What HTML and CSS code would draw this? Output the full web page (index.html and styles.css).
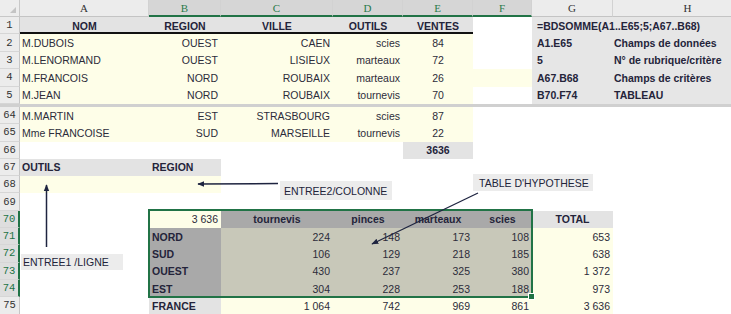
FILE: index.html
```html
<!DOCTYPE html>
<html lang="fr">
<head>
<meta charset="utf-8">
<title>BDSOMME - table d'hypothèse</title>
<link rel="stylesheet" href="styles.css">
</head>
<body>
<div class="sheet">
  <div class="row hdr">
    <div class="corner"><span class="tri"></span></div>
    <div class="ch">A</div><div class="ch sel">B</div><div class="ch sel">C</div><div class="ch sel">D</div><div class="ch sel">E</div><div class="ch sel">F</div><div class="ch">G</div><div class="ch">H</div>
  </div>

  <div class="row">
    <div class="rh">1</div>
    <div class="c m b gray thick">NOM</div>
    <div class="c m b gray thick">REGION</div>
    <div class="c m b gray thick">VILLE</div>
    <div class="c m b gray thick">OUTILS</div>
    <div class="c m b gray thick">VENTES</div>
    <div class="c"></div>
    <div class="c b side g span2">=BDSOMME(A1..E65;5;A67..B68)</div>
  </div>
  <div class="row">
    <div class="rh">2</div>
    <div class="c l cream">M.DUBOIS</div>
    <div class="c r cream">OUEST</div>
    <div class="c r cream">CAEN</div>
    <div class="c r cream">scies</div>
    <div class="c m cream">84</div>
    <div class="c"></div>
    <div class="c b side g">A1.E65</div>
    <div class="c b side h">Champs de données</div>
  </div>
  <div class="row">
    <div class="rh">3</div>
    <div class="c l cream">M.LENORMAND</div>
    <div class="c r cream">OUEST</div>
    <div class="c r cream">LISIEUX</div>
    <div class="c r cream">marteaux</div>
    <div class="c m cream">72</div>
    <div class="c"></div>
    <div class="c b side g">5</div>
    <div class="c b side h">N° de rubrique/critère</div>
  </div>
  <div class="row">
    <div class="rh">4</div>
    <div class="c l cream">M.FRANCOIS</div>
    <div class="c r cream">NORD</div>
    <div class="c r cream">ROUBAIX</div>
    <div class="c r cream">marteaux</div>
    <div class="c m cream">26</div>
    <div class="c cream"></div>
    <div class="c b side g">A67.B68</div>
    <div class="c b side h">Champs de critères</div>
  </div>
  <div class="row">
    <div class="rh">5</div>
    <div class="c l cream">M.JEAN</div>
    <div class="c r cream">NORD</div>
    <div class="c r cream">ROUBAIX</div>
    <div class="c r cream">tournevis</div>
    <div class="c m cream">70</div>
    <div class="c"></div>
    <div class="c b side g">B70.F74</div>
    <div class="c b side h">TABLEAU</div>
  </div>

  <div class="sep"></div>

  <div class="row lo">
    <div class="rh">64</div>
    <div class="c l cream">M.MARTIN</div>
    <div class="c r cream">EST</div>
    <div class="c r cream">STRASBOURG</div>
    <div class="c r cream">scies</div>
    <div class="c m cream">87</div>
    <div class="c"></div><div class="c"></div><div class="c"></div>
  </div>
  <div class="row lo">
    <div class="rh">65</div>
    <div class="c l cream">Mme FRANCOISE</div>
    <div class="c r cream">SUD</div>
    <div class="c r cream">MARSEILLE</div>
    <div class="c r cream">tournevis</div>
    <div class="c m cream">22</div>
    <div class="c"></div><div class="c"></div><div class="c"></div>
  </div>
  <div class="row lo">
    <div class="rh">66</div>
    <div class="c"></div><div class="c"></div><div class="c"></div><div class="c"></div>
    <div class="c m b gray">3636</div>
    <div class="c"></div><div class="c"></div><div class="c"></div>
  </div>
  <div class="row lo">
    <div class="rh">67</div>
    <div class="c l b gray">OUTILS</div>
    <div class="c l b gray pl">REGION</div>
    <div class="c"></div><div class="c"></div><div class="c"></div><div class="c"></div><div class="c"></div><div class="c"></div>
  </div>
  <div class="row lo">
    <div class="rh">68</div>
    <div class="c cream"></div>
    <div class="c cream"></div>
    <div class="c"></div><div class="c"></div><div class="c"></div><div class="c"></div><div class="c"></div><div class="c"></div>
  </div>
  <div class="row lo">
    <div class="rh">69</div>
    <div class="c"></div><div class="c"></div><div class="c"></div><div class="c"></div><div class="c"></div><div class="c"></div><div class="c"></div><div class="c"></div>
  </div>
  <div class="row lo">
    <div class="rh on">70</div>
    <div class="c"></div>
    <div class="c r cream">3 636</div>
    <div class="c m b dark">tournevis</div>
    <div class="c m b dark">pinces</div>
    <div class="c m b dark">marteaux</div>
    <div class="c m b dark">scies</div>
    <div class="c m b gray">TOTAL</div>
    <div class="c"></div>
  </div>
  <div class="row lo">
    <div class="rh on">71</div>
    <div class="c"></div>
    <div class="c l b dark pl">NORD</div>
    <div class="c r olive">224</div>
    <div class="c r olive">148</div>
    <div class="c r olive">173</div>
    <div class="c r olive">108</div>
    <div class="c r cream">653</div>
    <div class="c"></div>
  </div>
  <div class="row lo">
    <div class="rh on">72</div>
    <div class="c"></div>
    <div class="c l b dark pl">SUD</div>
    <div class="c r olive">106</div>
    <div class="c r olive">129</div>
    <div class="c r olive">218</div>
    <div class="c r olive">185</div>
    <div class="c r cream">638</div>
    <div class="c"></div>
  </div>
  <div class="row lo">
    <div class="rh on">73</div>
    <div class="c"></div>
    <div class="c l b dark pl">OUEST</div>
    <div class="c r olive">430</div>
    <div class="c r olive">237</div>
    <div class="c r olive">325</div>
    <div class="c r olive">380</div>
    <div class="c r cream">1 372</div>
    <div class="c"></div>
  </div>
  <div class="row lo">
    <div class="rh on">74</div>
    <div class="c"></div>
    <div class="c l b dark pl">EST</div>
    <div class="c r olive">304</div>
    <div class="c r olive">228</div>
    <div class="c r olive">253</div>
    <div class="c r olive">188</div>
    <div class="c r cream">973</div>
    <div class="c"></div>
  </div>
  <div class="row lo">
    <div class="rh">75</div>
    <div class="c"></div>
    <div class="c l b gray pl">FRANCE</div>
    <div class="c r cream">1 064</div>
    <div class="c r cream">742</div>
    <div class="c r cream">969</div>
    <div class="c r cream">861</div>
    <div class="c r cream">3 636</div>
    <div class="c"></div>
  </div>

  <div class="selection"><span class="handle"></span></div>

  <svg class="arrows" width="731" height="314" viewBox="0 0 731 314">
    <defs>
      <marker id="ah" viewBox="0 0 10 10" refX="9" refY="5" markerWidth="7" markerHeight="7" orient="auto" markerUnits="userSpaceOnUse">
        <path d="M0 1 L10 5 L0 9 Z" fill="#1e2440"/>
      </marker>
    </defs>
    <line x1="278" y1="183.5" x2="198" y2="184" stroke="#1e2440" stroke-width="1.5" marker-end="url(#ah)"/>
    <line x1="46.5" y1="247" x2="46.5" y2="185" stroke="#1e2440" stroke-width="1.5" marker-end="url(#ah)"/>
    <line x1="478" y1="193" x2="372" y2="244" stroke="#1e2440" stroke-width="1.3" marker-end="url(#ah)"/>
  </svg>

  <div class="note n2">ENTREE2/COLONNE</div>
  <div class="note n1">ENTREE1 /LIGNE</div>
  <div class="note n3">TABLE D'HYPOTHESE</div>
</div>
</body>
</html>
```

FILE: styles.css
```css
html, body {
  margin: 0;
  padding: 0;
  background: #ffffff;
}
body {
  font-family: "Liberation Sans", Arial, sans-serif;
  font-size: 10.5px;
  color: #2c2c3a;
}
.sheet {
  position: relative;
  width: 731px;
  height: 314px;
  overflow: hidden;
}
.row {
  display: grid;
  grid-template-columns: 20px 129px 72px 112px 70px 70px 59px 81px 150px;
  width: 763px;
  height: 17.4px;
}
.row.lo {
  height: 17.3px;
}
.row.hdr {
  height: 17px;
}
.corner {
  position: relative;
  background: #ededed;
  border-right: 1px solid #c8c8c8;
  border-bottom: 1px solid #c8c8c8;
  box-sizing: border-box;
}
.tri {
  position: absolute;
  right: 3px;
  bottom: 3px;
  width: 0;
  height: 0;
  border-left: 6px solid transparent;
  border-bottom: 6px solid #c4c4c4;
}
.ch {
  display: flex;
  align-items: center;
  justify-content: center;
  background: #ececec;
  border-right: 1px solid #d2d2d2;
  border-bottom: 1px solid #c4c4c4;
  box-sizing: border-box;
  font-family: "Liberation Serif", "Times New Roman", serif;
  font-size: 11px;
  color: #333;
}
.ch.sel {
  background: #d6d6d6;
  color: #2a7a4a;
  border-bottom: 2px solid #217346;
}
.rh {
  display: flex;
  align-items: center;
  justify-content: center;
  background: #ececec;
  border-right: 1px solid #c6c6c6;
  border-bottom: 1px solid #d6d6d6;
  box-sizing: border-box;
  font-family: "Liberation Mono", "Courier New", monospace;
  font-size: 10.5px;
  color: #333;
}
.rh.on {
  background: #dedede;
  color: #217346;
  border-right: 2px solid #217346;
}
.c {
  display: flex;
  align-items: center;
  padding: 0 2px;
  white-space: nowrap;
  min-width: 0;
  box-sizing: border-box;
}
.l { justify-content: flex-start; }
.r { justify-content: flex-end; padding-right: 3px; }
.m { justify-content: center; }
.b { font-weight: bold; color: #24243a; }
.pl { padding-left: 3px; }
.cream { background: #fefee8; }
.gray { background: #e3e3e3; }
.dark { background: #a9a9a9; }
.olive { background: #c8c8b9; }
.side { background: #e6e6e6; }
.side.g { padding-left: 5px; }
.side.h { padding-left: 1px; }
.span2 { grid-column: span 2; }
.thick { box-shadow: inset 0 -2px 0 #111; }
.sep {
  height: 3px;
  background: #d0d0d0;
}
.selection {
  position: absolute;
  left: 148px;
  top: 209px;
  width: 385px;
  height: 89px;
  border: 2px solid #217346;
  box-sizing: border-box;
}
.handle {
  position: absolute;
  right: -4px;
  bottom: -4px;
  width: 5px;
  height: 5px;
  background: #217346;
  border: 1px solid #fff;
}
.arrows {
  position: absolute;
  left: 0;
  top: 0;
  pointer-events: none;
}
.note {
  position: absolute;
  display: flex;
  align-items: center;
  background: #ececec;
  white-space: nowrap;
  color: #22243a;
  box-sizing: border-box;
}
.n2 {
  left: 280px;
  top: 181px;
  width: 112px;
  height: 19px;
  padding-left: 4px;
}
.n1 {
  left: 21px;
  top: 254px;
  width: 102px;
  height: 16px;
  padding-left: 2px;
}
.n3 {
  left: 473px;
  top: 174px;
  width: 120px;
  height: 17px;
  padding-left: 6px;
}
```
